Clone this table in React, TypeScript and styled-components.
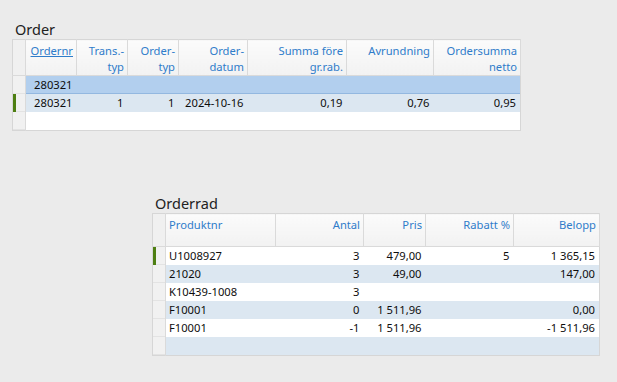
import React from 'react';
import styled, { createGlobalStyle } from 'styled-components';

const GlobalStyle = createGlobalStyle`
  html, body {
    margin: 0;
    padding: 0;
    background: #ebebeb;
    font-family: "Noto Sans", "Open Sans", sans-serif;
  }
`;

const Page = styled.div`
  width: 617px;
  height: 382px;
  padding-top: 19px;
  box-sizing: border-box;
  overflow: hidden;
`;

const Section = styled.section<{ left: number; top?: number }>`
  margin-left: ${({ left }) => left}px;
  margin-top: ${({ top }) => top ?? 0}px;
`;

const Title = styled.div`
  font-size: 14.5px;
  line-height: 20px;
  color: #222;
  padding-left: 3px;
`;

const Table = styled.table`
  border-collapse: collapse;
  table-layout: fixed;
  background: #fff;
  border: 1px solid #d6d6d6;
  font-size: 11.2px;
  color: #0d0d0d;
`;

const Th = styled.th<{ align?: 'left' | 'right' }>`
  height: 33px;
  padding: 3px 3px 0 3px;
  box-sizing: border-box;
  vertical-align: top;
  text-align: ${({ align }) => align ?? 'right'};
  font-weight: 400;
  line-height: 16px;
  color: #2f7cca;
  background: linear-gradient(#fbfbfb, #f2f2f2);
  border-right: 1px solid #dadada;
  border-bottom: 1px solid #dadada;
  white-space: pre-line;
  overflow: hidden;
`;

const SortLabel = styled.span`
  text-decoration: underline;
`;

const CornerTh = styled.th`
  background: #f0f0f0;
  border-right: 1px solid #dadada;
  border-bottom: 1px solid #dadada;
  padding: 0;
`;

type RowTone = 'plain' | 'alt' | 'selected';

const rowBg: Record<RowTone, string> = {
  plain: '#ffffff',
  alt: '#dce7f1',
  selected: '#b2cfee',
};

const Tr = styled.tr<{ tone: RowTone }>`
  background: ${({ tone }) => rowBg[tone]};
  & > td:not(:first-child) {
    box-shadow: ${({ tone }) => (tone === 'selected' ? 'inset 0 -1px 0 #93b8e0' : 'none')};
  }
`;

const RowHead = styled.td<{ current?: boolean }>`
  padding: 0;
  height: 18px;
  background: #f1f1f1;
  border-right: 1px solid #dadada;
  box-shadow: ${({ current }) => (current ? 'inset 3px 0 0 #4e7f12, ' : '')}inset 0 -1px 0 #e3e3e3;
`;

const Td = styled.td<{ align?: 'left' | 'right' }>`
  padding: 0 4px 0 3px;
  height: 18px;
  box-sizing: border-box;
  line-height: 16px;
  text-align: ${({ align }) => align ?? 'right'};
  white-space: nowrap;
  overflow: hidden;
`;

const orderCols = [13, 51, 51, 51, 69, 99, 87, 87];
const orderHeads = ['Ordernr', 'Trans.-\ntyp', 'Order-\ntyp', 'Order-\ndatum', 'Summa före\ngr.rab.', 'Avrundning', 'Ordersumma\nnetto'];
const orderRows: { tone: RowTone; current?: boolean; cells: string[] }[] = [
  { tone: 'selected', cells: ['280321', '', '', '', '', '', ''] },
  { tone: 'alt', current: true, cells: ['280321', '1', '1', '2024-10-16', '0,19', '0,76', '0,95'] },
  { tone: 'plain', cells: ['', '', '', '', '', '', ''] },
];

const lineCols = [13, 110, 88, 62, 88, 86];
const lineHeads = ['Produktnr', 'Antal', 'Pris', 'Rabatt %', 'Belopp'];
const lineRows: { current?: boolean; cells: string[] }[] = [
  { current: true, cells: ['U1008927', '3', '479,00', '5', '1 365,15'] },
  { cells: ['21020', '3', '49,00', '', '147,00'] },
  { cells: ['K10439-1008', '3', '', '', ''] },
  { cells: ['F10001', '0', '1 511,96', '', '0,00'] },
  { cells: ['F10001', '-1', '1 511,96', '', '-1 511,96'] },
  { cells: ['', '', '', '', ''] },
];

const ColGroup: React.FC<{ widths: number[] }> = ({ widths }) => (
  <colgroup>
    {widths.map((w, i) => (
      <col key={i} style={{ width: w }} />
    ))}
  </colgroup>
);

export default function App() {
  return (
    <Page>
      <GlobalStyle />
      <Section left={12}>
        <Title>Order</Title>
        <Table style={{ width: 509 }}>
          <ColGroup widths={orderCols} />
          <thead>
            <tr>
              <CornerTh />
              {orderHeads.map((h, i) => (
                <Th key={h}>{i === 0 ? <SortLabel>{h}</SortLabel> : h}</Th>
              ))}
            </tr>
          </thead>
          <tbody>
            {orderRows.map((r, ri) => (
              <Tr key={ri} tone={r.tone}>
                <RowHead current={r.current} />
                {r.cells.map((c, ci) => (
                  <Td key={ci}>{c}</Td>
                ))}
              </Tr>
            ))}
          </tbody>
        </Table>
      </Section>

      <Section left={152} top={62}>
        <Title>Orderrad</Title>
        <Table style={{ width: 448 }}>
          <ColGroup widths={lineCols} />
          <thead>
            <tr>
              <CornerTh />
              {lineHeads.map((h, i) => (
                <Th key={h} align={i === 0 ? 'left' : 'right'}>{h}</Th>
              ))}
            </tr>
          </thead>
          <tbody>
            {lineRows.map((r, ri) => (
              <Tr key={ri} tone={ri % 2 === 1 ? 'alt' : 'plain'}>
                <RowHead current={r.current} />
                {r.cells.map((c, ci) => (
                  <Td key={ci} align={ci === 0 ? 'left' : 'right'}>{c}</Td>
                ))}
              </Tr>
            ))}
          </tbody>
        </Table>
      </Section>
    </Page>
  );
}
